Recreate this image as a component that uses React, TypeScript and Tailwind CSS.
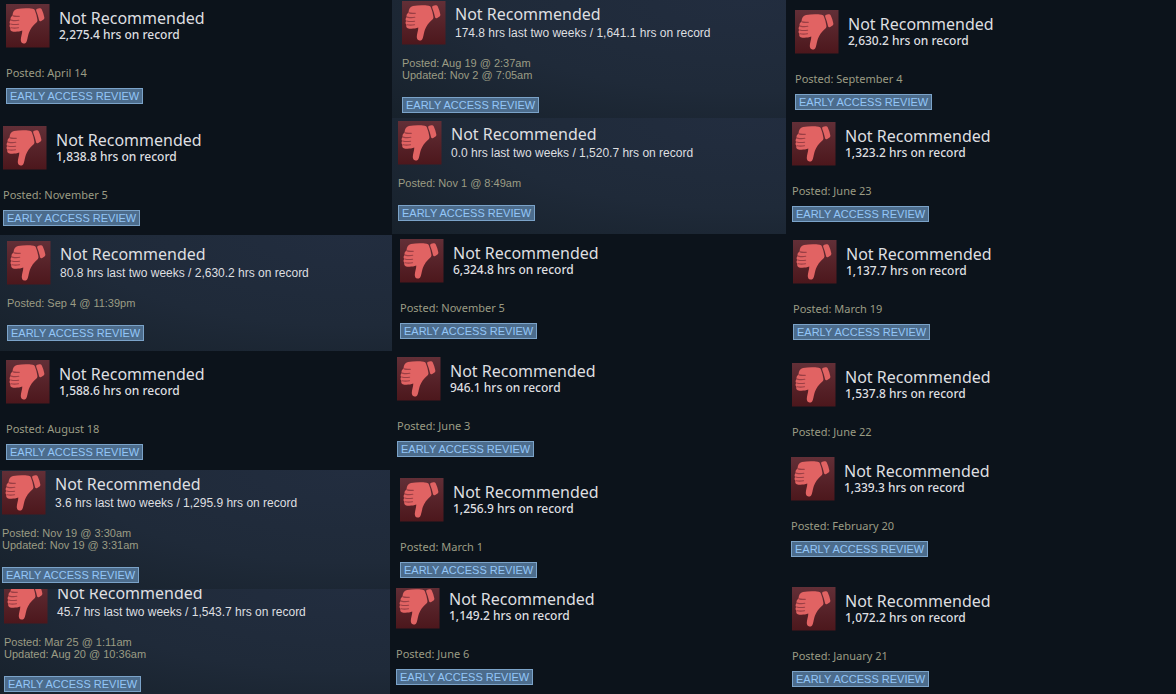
import React from "react";
import clsx from "clsx";

type Review = {
  hours: string;
  dates: string[];
  recent?: boolean;
  badge?: boolean;
  place: string;
  clip?: string;
};

const columns: Review[][] = [
  [
    { hours: "2,275.4 hrs on record", dates: ["Posted: April 14"], place: "pt-1 pl-1.5" },
    { hours: "1,838.8 hrs on record", dates: ["Posted: November 5"], place: "pt-[22px] pl-[3px]" },
    { hours: "80.8 hrs last two weeks / 2,630.2 hrs on record", dates: ["Posted: Sep 4 @ 11:39pm"], recent: true, place: "mt-[9px] pt-1.5 pb-2.5 pl-[7px]" },
    { hours: "1,588.6 hrs on record", dates: ["Posted: August 18"], place: "pt-[9px] pl-1.5" },
    { hours: "3.6 hrs last two weeks / 1,295.9 hrs on record", dates: ["Posted: Nov 19 @ 3:30am", "Updated: Nov 19 @ 3:31am"], recent: true, place: "mt-2.5 mr-0.5 pt-px pb-1.5 pl-0.5" },
    { hours: "45.7 hrs last two weeks / 1,543.7 hrs on record", dates: ["Posted: Mar 25 @ 1:11am", "Updated: Aug 20 @ 10:36am"], recent: true, place: "mr-0.5 pb-0.5 pl-1", clip: "-mt-[9px]" },
  ],
  [
    { hours: "174.8 hrs last two weeks / 1,641.1 hrs on record", dates: ["Posted: Aug 19 @ 2:37am", "Updated: Nov 2 @ 7:05am"], recent: true, place: "pt-px pb-[5px] pl-2.5" },
    { hours: "0.0 hrs last two weeks / 1,520.7 hrs on record", dates: ["Posted: Nov 1 @ 8:49am"], recent: true, place: "pt-[3px] pb-[13px] pl-1.5" },
    { hours: "6,324.8 hrs on record", dates: ["Posted: November 5"], place: "pt-[5px] pl-2" },
    { hours: "946.1 hrs on record", dates: ["Posted: June 3"], place: "pt-[18px] pl-[5px]" },
    { hours: "1,256.9 hrs on record", dates: ["Posted: March 1"], place: "pt-[21px] pl-2" },
    { hours: "1,149.2 hrs on record", dates: ["Posted: June 6"], place: "mt-2.5 pl-1", clip: "-mt-[3px]" },
  ],
  [
    { hours: "2,630.2 hrs on record", dates: ["Posted: September 4"], place: "pt-2.5 pl-[9px]" },
    { hours: "1,323.2 hrs on record", dates: ["Posted: June 23"], place: "pt-3 pl-1.5" },
    { hours: "1,137.7 hrs on record", dates: ["Posted: March 19"], place: "pt-[18px] pl-[7px]" },
    { hours: "1,537.8 hrs on record", dates: ["Posted: June 22"], badge: false, place: "pt-[23px] pl-1.5" },
    { hours: "1,339.3 hrs on record", dates: ["Posted: February 20"], place: "pt-[19px] pl-[5px]" },
    { hours: "1,072.2 hrs on record", dates: ["Posted: January 21"], place: "pt-[30px] pl-1.5" },
  ],
];

function ThumbDown() {
  return (
    <svg viewBox="0 0 44 44" className="size-11 shrink-0" aria-hidden="true">
      <defs>
        <linearGradient id="tile" x1="0" y1="0" x2="0" y2="1">
          <stop offset="0" stopColor="#622f37" />
          <stop offset="1" stopColor="#4c171c" />
        </linearGradient>
      </defs>
      <rect width="43.5" height="43.5" fill="url(#tile)" />
      <g fill="#e16363">
        <path d="M30.300 7c-.4-1.200 0-1.900 1-2.200l2-.5c1.200-.3 2 .1 2.500 1.200 1.100 2.500 2 5.100 2.500 7.700.2 1.200-.1 1.900-1.100 2.500l-2 1.200c-1.100.6-1.900.3-2.200-.9-.6-3.200-1.500-6-2.700-9z" />
        <path d="M11 5.100c4.800-.9 10.500-.9 15.600-.4 1.200.1 1.900.6 2.300 1.700 1.200 3 2.100 6.100 2.500 9.300.2 1.300-.3 2.200-1.300 3.100-3.200 2.900-5.700 6-7.200 10-.9 2.500-1.200 5.600-2.100 8.200-.7 2-1.900 2.800-3.400 2.500-1.900-.3-2.700-1.800-2.600-3.900.2-3.200 1.400-5.500 1.500-9-2.600 1-5.700 1.400-8.900 1.100-2.600-.2-3.700-1.800-3-3.900-1-.9-1.200-2.600-.3-3.900-.9-1.300-.6-2.900.6-4-.6-1.800.2-3.400 1.800-4.200.2-3.600 1.900-6.200 4.500-6.600z" />
      </g>
      <g fill="none" stroke="#9a3f45" strokeWidth="1.100" strokeLinecap="round">
        <path d="M7.200 11.900c2 .6 4 .6 6.200.3M5.200 16.100c2.600.7 5 .7 7.600.2M4.700 20c2.600.7 5.200.7 7.900.2M5.200 23.800c2.500.5 4.800.4 7.300-.1" />
      </g>
    </svg>
  );
}

function ReviewCard({ hours, dates, recent = false, badge = true, place, clip }: Review) {
  return (
    <article
      className={clsx(
        "overflow-hidden",
        recent && "bg-[radial-gradient(ellipse_at_90%_0%,#222d3f_0%,#1f2a39_55%,#17212b_100%)]",
        place,
      )}
    >
      <div className={clsx(clip)}>
        <header className="flex h-11 gap-[9px]">
          <ThumbDown />
          <div className={clsx("whitespace-nowrap text-[#dedfe0]", recent ? "pt-[5px]" : "pt-1.5")}>
            <h2 className="font-['Noto_Sans','Open_Sans',sans-serif] text-base leading-4">
              Not Recommended
            </h2>
            <p
              className={
                recent
                  ? "pt-[3px] font-['Liberation_Sans',sans-serif] text-xs leading-4"
                  : "pt-px font-['Noto_Sans','Open_Sans',sans-serif] text-xs leading-4 font-medium"
              }
            >
              {hours}
            </p>
          </div>
        </header>
        <div
          className={clsx(
            "text-[11px] leading-3 text-[#9b9c84]",
            recent
              ? "mt-3 font-['Liberation_Sans',sans-serif]"
              : "mt-[19px] font-['Noto_Sans','Open_Sans',sans-serif]",
          )}
        >
          {dates.map((date) => (
            <p key={date}>{date}</p>
          ))}
        </div>
        {badge && (
          <div
            className={clsx(
              "flex h-4 w-fit items-center border border-[#7ba3c9] bg-[#4c6c8c] px-[3px] font-['Liberation_Sans',sans-serif] text-[11px] leading-3 whitespace-nowrap text-[#93c6f8]",
              recent ? "mt-4" : "mt-[9px]",
            )}
          >
            EARLY ACCESS REVIEW
          </div>
        )}
      </div>
    </article>
  );
}

export default function App() {
  return (
    <main className="grid min-h-screen grid-cols-[392fr_394fr_390fr] bg-[#0c131b]">
      {columns.map((reviews, index) => (
        <section key={index} className="min-w-0" aria-label={`Reviews, column ${index + 1}`}>
          {reviews.map((review) => (
            <ReviewCard key={review.hours} {...review} />
          ))}
        </section>
      ))}
    </main>
  );
}
